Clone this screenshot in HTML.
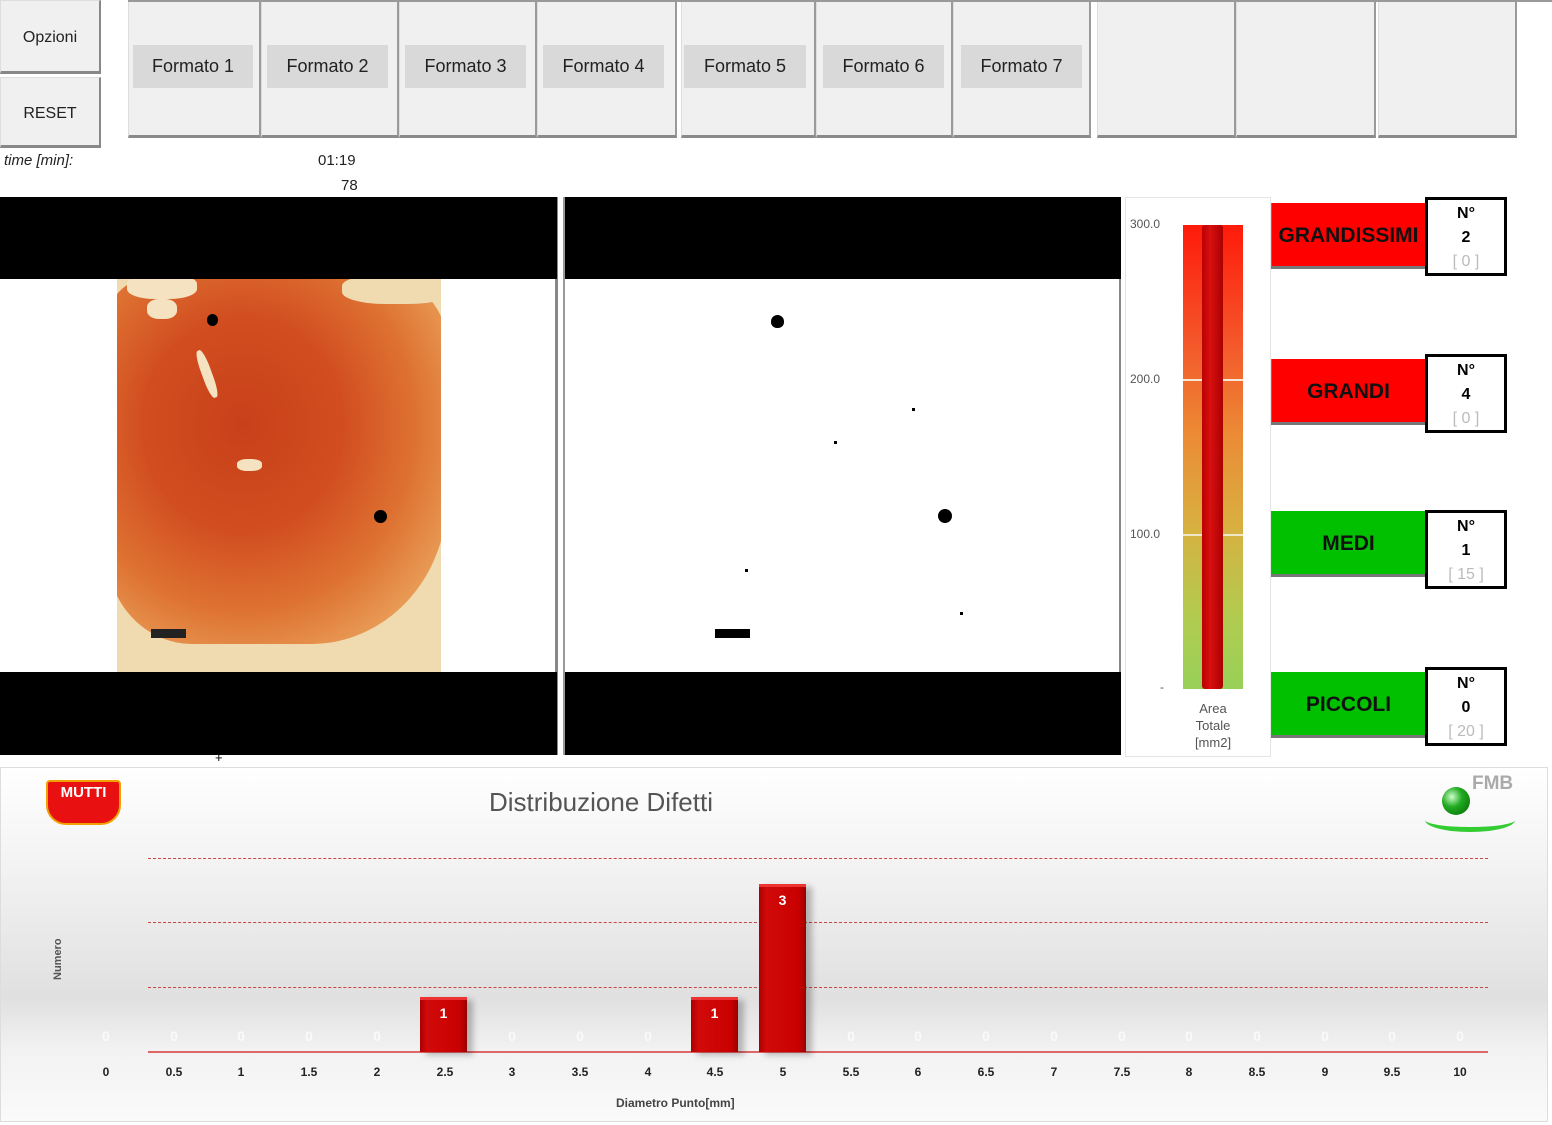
<!DOCTYPE html>
<html><head><meta charset="utf-8"><style>
*{margin:0;padding:0;box-sizing:border-box}
body{width:1552px;height:1125px;background:#fff;position:relative;overflow:hidden;font-family:"Liberation Sans",sans-serif}
.a{position:absolute}
.btn{position:absolute;background:#f0f0f0;border-right:2px solid #888;border-bottom:3px solid #888;border-top:1px solid #ddd;border-left:1px solid #ddd}
.cell{position:absolute;top:0;height:138px;background:#f0f0f0;border-right:2px solid #9a9a9a;border-bottom:3px solid #8a8a8a;border-left:1px solid #ddd}
.lab{position:absolute;top:45px;height:43px;background:#d9d9d9;font-size:18px;color:#222;text-align:center;line-height:43px}
.cat{position:absolute;left:1271px;width:154px;height:66px;font-weight:bold;font-size:21px;text-align:center;line-height:66px;color:#111;border-bottom:3px solid #777;border-left:1px solid #777}
.nb{position:absolute;left:1425px;width:82px;height:79px;border:3px solid #000;background:#fff;text-align:center;font-weight:bold;font-size:16px;line-height:24px;padding-top:2px}
.nb span{display:block;font-weight:normal;color:#bbb}
.xl{position:absolute;top:1065px;width:40px;margin-left:-20px;text-align:center;font-size:12px;font-weight:bold;color:#222}
.zl{position:absolute;top:1028px;width:30px;margin-left:-15px;text-align:center;font-size:14px;font-weight:bold;color:#fafafa}
.bar{position:absolute;width:47px;background:linear-gradient(90deg,#a00 0,#d10a0a 15%,#c80000 85%,#900 100%);border-top:3px solid #e33;color:#fff;font-weight:bold;font-size:14px;text-align:center;padding-top:5px;box-shadow:6px 3px 6px rgba(0,0,0,.25)}
.dash{position:absolute;left:148px;width:1340px;border-top:1.5px dashed #c44}
</style></head><body>
<div class="btn" style="left:0;top:0;width:101px;height:74px;font-size:16px;text-align:center;line-height:74px;color:#222">Opzioni</div>
<div class="btn" style="left:0;top:77px;width:101px;height:71px;font-size:16px;text-align:center;line-height:71px;color:#222">RESET</div>

<div class="cell" style="left:128px;width:133px"></div>
<div class="cell" style="left:261px;width:138px"></div>
<div class="cell" style="left:399px;width:138px"></div>
<div class="cell" style="left:537px;width:140px"></div>
<div class="cell" style="left:681px;width:135px"></div>
<div class="cell" style="left:816px;width:137px"></div>
<div class="cell" style="left:953px;width:138px"></div>
<div class="cell" style="left:1097px;width:139px"></div>
<div class="cell" style="left:1236px;width:140px"></div>
<div class="cell" style="left:1378px;width:139px"></div>
<div class="a" style="left:128px;top:0;width:1424px;height:2px;background:#999"></div>
<div class="lab" style="left:133px;width:120px">Formato 1</div>
<div class="lab" style="left:267px;width:121px">Formato 2</div>
<div class="lab" style="left:405px;width:121px">Formato 3</div>
<div class="lab" style="left:543px;width:121px">Formato 4</div>
<div class="lab" style="left:684px;width:122px">Formato 5</div>
<div class="lab" style="left:823px;width:121px">Formato 6</div>
<div class="lab" style="left:961px;width:121px">Formato 7</div>

<div class="a" style="left:4px;top:152px;font-size:15px;font-style:italic;color:#222">time [min]:</div>
<div class="a" style="left:318px;top:152px;font-size:15px;color:#222">01:19</div>
<div class="a" style="left:341px;top:177px;font-size:15px;color:#222">78</div>

<!-- left image -->
<div class="a" style="left:0;top:197px;width:558px;height:558px;background:#fff;border-right:3px solid #888">
 <div class="a" style="left:0;top:0;width:557px;height:82px;background:#000"></div>
 <div class="a" style="left:0;top:475px;width:557px;height:83px;background:#000"></div>
 <div class="a" style="left:117px;top:82px;width:324px;height:393px;background:#f0dab0;overflow:hidden">
  <div class="a" style="left:-10px;top:0px;width:340px;height:365px;border-radius:12% 18% 40% 25%;background:radial-gradient(ellipse at 40% 40%,#c8401a 0,#d24e20 35%,#de7232 60%,#e89a55 80%,#efc080 100%)"></div>
  <div class="a" style="left:10px;top:-5px;width:70px;height:25px;background:#f4e2c0;border-radius:40%"></div>
  <div class="a" style="left:225px;top:-5px;width:110px;height:30px;background:#f0dab0;border-radius:40%"></div>
  <div class="a" style="left:30px;top:20px;width:30px;height:20px;background:#f4e2c0;border-radius:40%"></div>
  <div class="a" style="left:85px;top:70px;width:10px;height:50px;background:#f4e2c0;border-radius:40%;transform:rotate(-20deg)"></div>
  <div class="a" style="left:120px;top:180px;width:25px;height:12px;background:#f4e2c0;border-radius:40%"></div>
  <div class="a" style="left:90px;top:35px;width:11px;height:12px;background:#000;border-radius:50%"></div>
  <div class="a" style="left:257px;top:231px;width:13px;height:13px;background:#000;border-radius:50%"></div>
  <div class="a" style="left:34px;top:350px;width:35px;height:9px;background:#222"></div>
 </div>
</div>
<!-- right image -->
<div class="a" style="left:563px;top:197px;width:558px;height:558px;background:#fff;border-left:2px solid #999;border-right:2px solid #888">
 <div class="a" style="left:0;top:0;width:556px;height:82px;background:#000"></div>
 <div class="a" style="left:0;top:475px;width:556px;height:83px;background:#000"></div>
 <div class="a" style="left:206px;top:118px;width:13px;height:13px;background:#000;border-radius:50% 50% 45% 45%"></div>
 <div class="a" style="left:373px;top:312px;width:14px;height:14px;background:#000;border-radius:50%"></div>
 <div class="a" style="left:150px;top:432px;width:35px;height:9px;background:#000"></div>
 <div class="a" style="left:347px;top:211px;width:3px;height:3px;background:#000"></div>
 <div class="a" style="left:269px;top:244px;width:3px;height:3px;background:#000"></div>
 <div class="a" style="left:180px;top:372px;width:3px;height:3px;background:#000"></div>
 <div class="a" style="left:395px;top:415px;width:3px;height:3px;background:#000"></div>
</div>

<!-- gauge -->
<div class="a" style="left:1125px;top:197px;width:146px;height:560px;border:1px solid #e4e4e4;background:#fff">
 <div class="a" style="left:57px;top:27px;width:60px;height:464px;background:linear-gradient(#ff1a0a 0,#f4562a 25%,#ec8a35 45%,#d8b040 65%,#b0cc50 85%,#98d058 100%)"></div>
 <div class="a" style="left:57px;top:181px;width:60px;height:2px;background:#f3e6d4"></div>
 <div class="a" style="left:57px;top:336px;width:60px;height:2px;background:#efe8c8"></div>
 <div class="a" style="left:76px;top:27px;width:21px;height:464px;background:linear-gradient(90deg,#b00 0,#d81010 40%,#a00 100%);border-radius:3px"></div>
 <div class="a" style="left:4px;top:19px;font-size:12px;color:#555">300.0</div>
 <div class="a" style="left:4px;top:174px;font-size:12px;color:#555">200.0</div>
 <div class="a" style="left:4px;top:329px;font-size:12px;color:#555">100.0</div>
 <div class="a" style="left:34px;top:482px;font-size:12px;color:#555">-</div>
 <div class="a" style="left:50px;top:502px;width:74px;text-align:center;font-size:13px;line-height:17px;color:#555">Area<br>Totale<br>[mm2]</div>
</div>

<div class="cat" style="top:203px;background:#ff0000">GRANDISSIMI</div>
<div class="nb" style="top:197px">N°<br>2<span>[ 0 ]</span></div>
<div class="cat" style="top:359px;background:#ff0000">GRANDI</div>
<div class="nb" style="top:354px">N°<br>4<span>[ 0 ]</span></div>
<div class="cat" style="top:511px;background:#00c000">MEDI</div>
<div class="nb" style="top:510px">N°<br>1<span>[ 15 ]</span></div>
<div class="cat" style="top:672px;background:#00c000">PICCOLI</div>
<div class="nb" style="top:667px">N°<br>0<span>[ 20 ]</span></div>

<div class="a" style="left:215px;top:750px;font-size:13px">+</div>

<!-- chart -->
<div class="a" style="left:0;top:767px;width:1548px;height:355px;border:1px solid #ddd;background:linear-gradient(#fff 0,#f4f4f4 25%,#e0e0e0 65%,#f2f2f2 80%,#fafafa 100%)"></div>
<div class="a" style="left:46px;top:780px;width:75px;height:45px;background:#e81010;border:2px solid #f0a000;border-radius:4px 4px 20px 20px;color:#fff;font-weight:bold;font-size:15px;text-align:center;line-height:22px">MUTTI</div>
<div class="a" style="left:489px;top:787px;font-size:26px;color:#555">Distribuzione Difetti</div>
<div class="a" style="left:1472px;top:773px;font-size:19px;font-weight:bold;color:#aaa">FMB</div>
<div class="a" style="left:1442px;top:787px;width:28px;height:28px;border-radius:50%;background:radial-gradient(circle at 35% 35%,#cfc 0,#2a2 40%,#060 100%)"></div>
<div class="a" style="left:1425px;top:808px;width:90px;height:24px;border-radius:50%;border-bottom:5px solid #3c3"></div>
<div class="a" style="left:52px;top:980px;font-size:11px;font-weight:bold;color:#555;transform:rotate(-90deg);transform-origin:left top">Numero</div>

<div class="dash" style="top:858px"></div>
<div class="dash" style="top:922px"></div>
<div class="dash" style="top:987px"></div>
<div class="a" style="left:148px;top:1051px;width:1340px;height:2px;background:#d66"></div>

<div class="bar" style="left:420px;top:997px;height:55px">1</div>
<div class="bar" style="left:691px;top:997px;height:55px">1</div>
<div class="bar" style="left:759px;top:884px;height:168px">3</div>

<div class="zl" style="left:106px">0</div><div class="zl" style="left:174px">0</div><div class="zl" style="left:241px">0</div><div class="zl" style="left:309px">0</div><div class="zl" style="left:377px">0</div>
<div class="zl" style="left:512px">0</div><div class="zl" style="left:580px">0</div><div class="zl" style="left:648px">0</div>
<div class="zl" style="left:851px">0</div><div class="zl" style="left:918px">0</div><div class="zl" style="left:986px">0</div><div class="zl" style="left:1054px">0</div><div class="zl" style="left:1122px">0</div><div class="zl" style="left:1189px">0</div><div class="zl" style="left:1257px">0</div><div class="zl" style="left:1325px">0</div><div class="zl" style="left:1392px">0</div><div class="zl" style="left:1460px">0</div>

<div class="xl" style="left:106px">0</div><div class="xl" style="left:174px">0.5</div><div class="xl" style="left:241px">1</div><div class="xl" style="left:309px">1.5</div><div class="xl" style="left:377px">2</div><div class="xl" style="left:445px">2.5</div><div class="xl" style="left:512px">3</div><div class="xl" style="left:580px">3.5</div><div class="xl" style="left:648px">4</div><div class="xl" style="left:715px">4.5</div><div class="xl" style="left:783px">5</div><div class="xl" style="left:851px">5.5</div><div class="xl" style="left:918px">6</div><div class="xl" style="left:986px">6.5</div><div class="xl" style="left:1054px">7</div><div class="xl" style="left:1122px">7.5</div><div class="xl" style="left:1189px">8</div><div class="xl" style="left:1257px">8.5</div><div class="xl" style="left:1325px">9</div><div class="xl" style="left:1392px">9.5</div><div class="xl" style="left:1460px">10</div>
<div class="a" style="left:616px;top:1096px;font-size:12px;font-weight:bold;color:#444">Diametro Punto[mm]</div>
</body></html>
